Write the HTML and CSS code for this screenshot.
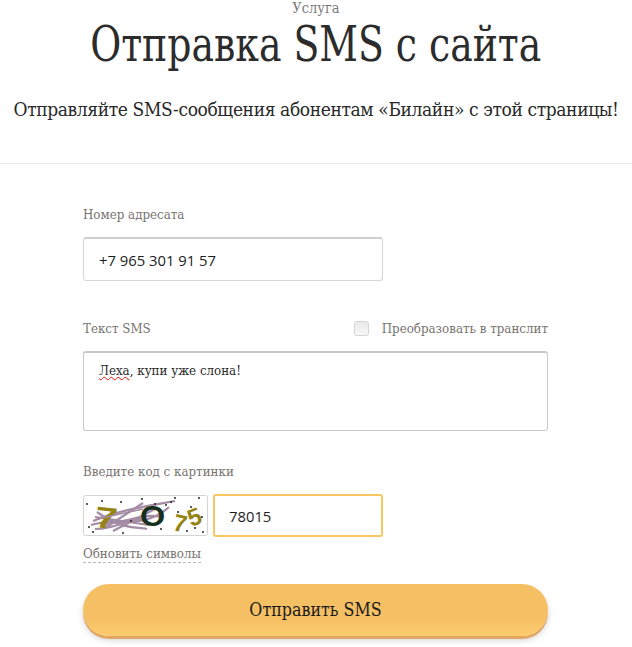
FILE: index.html
```html
<!DOCTYPE html>
<html lang="ru">
<head>
<meta charset="utf-8">
<title>Отправка SMS с сайта</title>
<link rel="stylesheet" href="styles.css">
</head>
<body>
<header class="head">
  <div class="eyebrow">Услуга</div>
  <h1 class="title"><span class="title-text">Отправка SMS с сайта</span></h1>
  <p class="lead">Отправляйте SMS-сообщения абонентам «Билайн» с этой страницы!</p>
</header>
<form class="form">
  <label class="label label-first">Номер адресата</label>
  <div class="field field-phone">+7 965 301 91 57</div>
  <div class="row-between">
    <label class="label">Текст SMS</label>
    <label class="translit"><span class="check"></span><span>Преобразовать в транслит</span></label>
  </div>
  <div class="area"><span class="typo">Леха</span>, купи уже слона!</div>
  <label class="label label-code">Введите код с картинки</label>
  <div class="captcha-row">
    <svg class="captcha" viewBox="0 0 125 41" width="125" height="41" aria-hidden="true">
      <rect x="0.5" y="0.5" width="124" height="40" rx="2" fill="#fff" stroke="#d4d4d4"/>
      <g fill="none" stroke="#a48ca4" stroke-width="2.2">
        <path d="M10 26 C40 14 70 10 92 6"/>
        <path d="M8 30 C30 22 60 36 86 12"/>
        <path d="M12 34 C40 34 55 16 78 22"/>
        <path d="M14 17 C40 36 58 32 64 34"/>
        <path d="M12 22 L66 30"/>
        <path d="M22 33 L60 8"/>
        <path d="M30 36 L72 14"/>
        <path d="M16 28 L62 24"/>
      </g>
      <g font-family="'Liberation Sans',sans-serif" font-weight="700">
        <text class="cap-olive" transform="translate(11 32) rotate(6) scale(1.35 1)" font-size="30">7</text>
        <text class="cap-dark" transform="translate(57 31) scale(1.08 1)" font-size="30">O</text>
        <text class="cap-olive" transform="translate(89 35) rotate(12)" font-size="24">7</text>
        <text class="cap-olive" transform="translate(108 32) rotate(-20)" font-size="24">5</text>
      </g>
      <g fill="none" stroke="#a48ca4" stroke-width="1.4">
        <path d="M14 24 L60 14"/>
        <path d="M22 30 L56 22"/>
      </g>
      <g fill="#1f2a1f">
        <circle cx="4" cy="9" r="1"/><circle cx="19" cy="6" r="1"/><circle cx="38" cy="7" r="1"/>
        <circle cx="59" cy="4" r="1"/><circle cx="88" cy="7" r="1"/><circle cx="92" cy="3" r="1"/>
        <circle cx="116" cy="3" r="1"/><circle cx="83" cy="10" r="1"/><circle cx="95" cy="17" r="1"/>
        <circle cx="6" cy="32" r="1"/><circle cx="10" cy="37" r="1"/><circle cx="40" cy="38" r="1"/>
        <circle cx="48" cy="26" r="1"/><circle cx="78" cy="34" r="1"/><circle cx="104" cy="36" r="1"/>
        <circle cx="112" cy="33" r="1"/><circle cx="120" cy="37" r="1"/><circle cx="108" cy="12" r="1"/>
        <circle cx="119" cy="22" r="1"/><circle cx="72" cy="9" r="1"/>
      </g>
    </svg>
    <div class="field field-code">78015</div>
  </div>
  <div class="refresh-row"><span class="refresh">Обновить символы</span></div>
  <button class="submit" type="button">Отправить SMS</button>
</form>
</body>
</html>
```

FILE: styles.css
```css
* { box-sizing: border-box; }
html, body { margin: 0; padding: 0; background: #fff; }
body {
  width: 632px;
  height: 647px;
  overflow: hidden;
  font-family: "DejaVu Serif", "Liberation Serif", serif;
  font-stretch: condensed;
  color: #282828;
}
.head {
  height: 164px;
  border-bottom: 1px solid #e8e8e8;
  text-align: center;
}
.eyebrow {
  font-size: 14.5px;
  line-height: 16px;
  color: #7b7b7b;
}
.title {
  margin: 0;
  font-size: 48px;
  line-height: 56px;
  font-weight: 400;
  color: #2c2c2c;
  white-space: nowrap;
}
.title-text {
  display: inline-block;
  transform: scaleX(0.875);
}
.lead {
  margin: 25px 0 0;
  font-size: 19px;
  letter-spacing: -0.38px;
  line-height: 24px;
  color: #282828;
  white-space: nowrap;
}
.form {
  width: 465px;
  margin-left: 83px;
}
.label {
  display: block;
  font-size: 13.2px;
  line-height: 16px;
  color: #77736e;
}
.label-first { padding-top: 43px; }
.field {
  width: 300px;
  height: 44px;
  padding-left: 15px;
  background: #fff;
  border: 1px solid #d6d6d6;
  border-top: 2px solid #d0d0d0;
  border-radius: 3px;
  font-family: "Open Sans", "Noto Sans", sans-serif;
  font-stretch: normal;
  font-size: 14.8px;
  line-height: 42px;
  color: #1c1c1c;
}
.field-phone { margin-top: 14px; }
.row-between {
  display: flex;
  justify-content: space-between;
  align-items: center;
  margin-top: 38px;
  height: 19px;
}
.translit {
  display: flex;
  align-items: center;
  gap: 13px;
  font-size: 13.2px;
  color: #77736e;
}
.check {
  width: 15px;
  height: 15px;
  border: 1px solid #d4d4d4;
  border-radius: 3px;
  background: linear-gradient(#e9e9e9, #f8f8f8);
}
.area {
  height: 80px;
  margin-top: 13px;
  padding: 9px 15px;
  border: 1px solid #c8c8c8;
  border-top: 2px solid #c8c8c8;
  border-radius: 3px;
  font-size: 13.2px;
  line-height: 18px;
  color: #2a2a2a;
}
.typo { text-decoration: underline wavy #e01010 1px; }
.label-code { margin-top: 33px; }
.captcha-row {
  display: flex;
  align-items: center;
  gap: 5px;
  margin-top: 14px;
}
.captcha { display: block; }
.cap-olive { fill: #968412; }
.cap-dark { fill: #17301c; }
.field-code {
  width: 170px;
  height: 43px;
  border: 2px solid #f9c661;
  line-height: 40px;
  padding-left: 14px;
}
.refresh-row { margin-top: 8px; line-height: 16px; height: 19px; }
.refresh {
  display: inline-block;
  font-size: 13.2px;
  line-height: 16px;
  color: #77736e;
  border-bottom: 1px dashed #b8b8b8;
}
.submit {
  display: block;
  width: 465px;
  height: 52px;
  margin-top: 20px;
  border: 0;
  border-radius: 26px;
  background: linear-gradient(#f5c064 0%, #f5c064 65%, #fdcb6e 100%);
  box-shadow: 0 3px 0 #e2a863, 0 4px 6px rgba(0,0,0,.18);
  font-family: inherit;
  font-stretch: condensed;
  font-size: 17.7px;
  color: #1b1b1b;
}
```
